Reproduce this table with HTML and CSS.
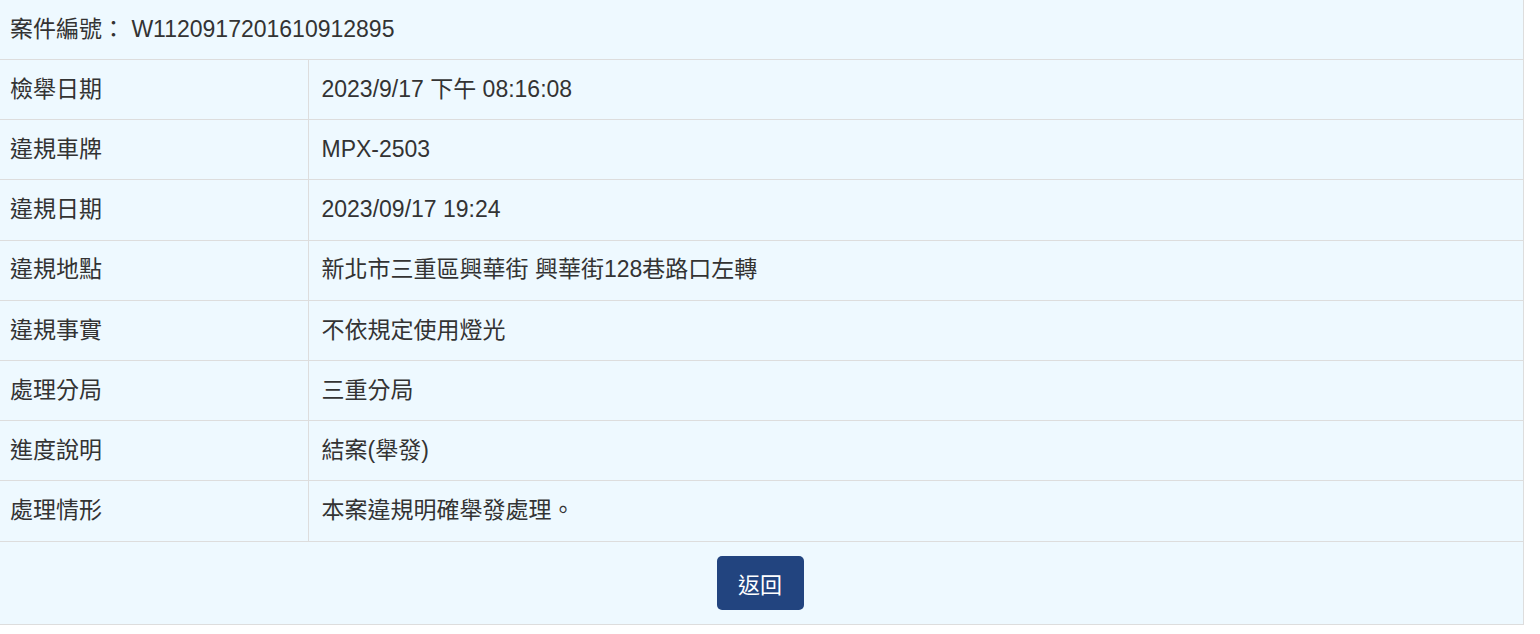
FILE: index.html
```html
<!DOCTYPE html>
<html lang="zh-Hant">
<head>
<meta charset="utf-8">
<title>案件查詢</title>
<link rel="stylesheet" href="styles.css">
</head>
<body>
<div class="panel">
  <div class="case-head">案件編號： W1120917201610912895</div>
  <table class="detail">
    <tr><th>檢舉日期</th><td>2023/9/17 下午 08:16:08</td></tr>
    <tr><th>違規車牌</th><td>MPX-2503</td></tr>
    <tr><th>違規日期</th><td>2023/09/17 19:24</td></tr>
    <tr><th>違規地點</th><td>新北市三重區興華街 興華街128巷路口左轉</td></tr>
    <tr><th>違規事實</th><td>不依規定使用燈光</td></tr>
    <tr><th>處理分局</th><td>三重分局</td></tr>
    <tr><th>進度說明</th><td>結案(舉發)</td></tr>
    <tr><th>處理情形</th><td>本案違規明確舉發處理。</td></tr>
  </table>
  <div class="actions">
    <button class="btn-back" type="button">返回</button>
  </div>
</div>
</body>
</html>
```

FILE: styles.css
```css
html, body {
  margin: 0;
  padding: 0;
  background: #ffffff;
}
body {
  font-family: "Liberation Sans", Arial, "Noto Sans CJK TC", sans-serif;
  color: #333333;
  font-size: 23px;
}
.panel {
  width: 1523px;
  background: #eef9ff;
  border-right: 1px solid #dddddd;
  border-bottom: 1px solid #dddddd;
}
.case-head {
  height: 59px;
  line-height: 58px;
  padding-left: 10px;
  box-sizing: border-box;
}
.detail {
  width: 100%;
  border-collapse: collapse;
}
.detail th,
.detail td {
  height: 60.2px;
  padding: 0;
  line-height: 1.2;
  border-top: 1px solid #dddddd;
  font-weight: normal;
  text-align: left;
  vertical-align: middle;
  box-sizing: border-box;
}
.detail th {
  width: 308px;
  padding-left: 10px;
  border-right: 1px solid #dddddd;
}
.detail td {
  padding-left: 13px;
}
.actions {
  border-top: 1px solid #dddddd;
  height: 83px;
  display: flex;
  justify-content: center;
  align-items: center;
  box-sizing: border-box;
}
.btn-back {
  width: 87px;
  height: 54px;
  border: none;
  border-radius: 5px;
  background: #22447f;
  color: #ffffff;
  font-family: "Liberation Sans", "Noto Sans CJK TC", sans-serif;
  font-size: 22px;
  padding: 0;
  margin-left: -3px;
  margin-bottom: 1px;
}
```
